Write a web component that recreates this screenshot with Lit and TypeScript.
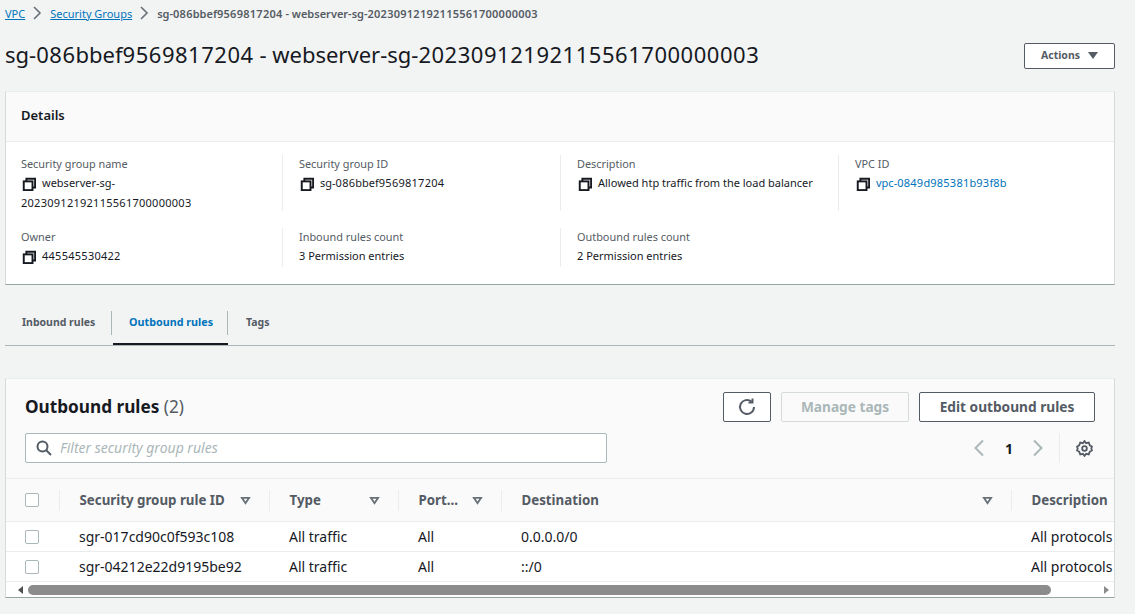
import {LitElement, html, css, svg} from 'lit';
import {customElement} from 'lit/decorators.js';

const copyIcon = html`<svg class="copy" viewBox="0 0 16 16" fill="none" stroke="#16191f" stroke-width="2.2">
  <path d="M5 4.500V2h10v10h-3"></path><rect x="2" y="5" width="10" height="10"></rect>
</svg>`;

const sortIcon = html`<svg class="sort" viewBox="0 0 12 10" width="11" height="9" fill="none" stroke="#687078" stroke-width="2">
  <path d="M2 2h8L6 8z"></path>
</svg>`;

const chevron = (d: string, color: string, sw = 1.6) =>
  html`<svg viewBox="0 0 12 18" width="12" height="18" fill="none" stroke=${color} stroke-width=${sw}>${svg`<path d=${d}></path>`}</svg>`;

// digits run a touch wider in the reference than in Noto Sans
const nums = (s: string) =>
  s.split(/(\d+)/).map((p, i) => (i % 2 ? html`<span class="dg">${p}</span>` : p));

const NAME = 'sg-086bbef9569817204 - webserver-sg-20230912192115561700000003';

const cols = [
  ['Security group rule ID', true],
  ['Type', true],
  ['Port...', true],
  ['Destination', true],
  ['Description', false],
] as const;

const rows = [
  ['sgr-017cd90c0f593c108', 'All traffic', 'All', '0.0.0.0/0', 'All protocols'],
  ['sgr-04212e22d9195be92', 'All traffic', 'All', '::/0', 'All protocols'],
];

@customElement('app-root')
export class AppRoot extends LitElement {
  static override styles = css`
    :host {
      display: block;
      width: 1135px;
      height: 614px;
      overflow: hidden;
      background: #f2f3f3;
      color: #16191f;
      font-family: 'Noto Sans', sans-serif;
      font-size: 11px;
    }
    a {
      color: #0073bb;
    }
    .dg {
      letter-spacing: 0.024em;
    }
    .crumbs {
      display: flex;
      align-items: center;
      height: 14px;
      padding: 6px 0 0 5px;
      font-size: 11px;
    }
    .crumbs a {
      text-decoration: underline;
    }
    .crumbs svg {
      margin: 0 7px 0 6px;
    }
    .crumbs .here {
      color: #545b64;
      font-weight: 600;
    }
    .title {
      display: flex;
      justify-content: space-between;
      align-items: center;
      height: 30px;
      margin: 19px 20px 0 5px;
    }
    h1 {
      margin: 0;
      font-size: 22px;
      font-weight: 400;
      line-height: 30px;
    }
    .btn {
      display: flex;
      align-items: center;
      justify-content: center;
      box-sizing: border-box;
      padding-bottom: 1px;
      border: 1px solid #545b64;
      border-radius: 2px;
      background: #fff;
      color: #545b64;
      font-weight: 700;
      font-size: 13.7px;
      height: 30px;
    }
    .btn.actions {
      width: 91px;
      height: 26px;
      font-size: 10.5px;
      gap: 8px;
      margin-top: 3px;
    }
    .btn.refresh {
      width: 48px;
    }
    .btn.off {
      width: 128px;
      border-color: #d5dbdb;
      color: #aab7b8;
      background: #fafafa;
    }
    .btn.edit {
      width: 176px;
    }
    .card {
      box-sizing: border-box;
      margin: 0 20px 0 5px;
      background: #fff;
      border-left: 1px solid #d5dbdb;
      border-right: 1px solid #d5dbdb;
      border-top: 1px solid #eaeded;
      border-bottom: 1px solid #95a5a6;
    }
    .details {
      margin-top: 22px;
      height: 194px;
    }
    .details-head {
      box-sizing: border-box;
      height: 50px;
      padding-left: 15px;
      line-height: 47px;
      font-size: 13px;
      font-weight: 600;
      background: #fafafa;
      border-bottom: 1px solid #eaeded;
    }
    .grid {
      display: grid;
      grid-template-columns: repeat(4, 278px);
      grid-template-rows: 56px 39px;
      row-gap: 17px;
      padding-top: 13px;
      margin-left: -1px;
    }
    .field {
      box-sizing: border-box;
      padding-left: 16px;
      border-right: 1px solid #eaeded;
      line-height: 20px;
    }
    .field:nth-child(4n),
    .field:last-child {
      border-right: 0;
    }
    .label {
      color: #545b64;
      height: 19px;
      margin-top: -1px;
      font-size: 10.9px;
    }
    .copy {
      vertical-align: -3.5px;
      margin: 0 6px 0 1px;
      width: 14px;
      height: 14px;
    }
    .tabs {
      display: flex;
      box-sizing: border-box;
      height: 41px;
      margin: 20px 20px 0 5px;
      border-bottom: 1px solid #aab7b8;
      font-weight: 700;
      font-size: 10.5px;
      color: #545b64;
    }
    .tab {
      position: relative;
      display: flex;
      align-items: center;
      height: 40px;
      padding: 0 15px 6px 18px;
      box-sizing: border-box;
    }
    .tab::after {
      content: '';
      position: absolute;
      right: 0;
      top: 6px;
      height: 24px;
      width: 1px;
      background: #aab7b8;
    }
    .tab:last-child::after {
      display: none;
    }
    .tab.first {
      width: 107px;
      padding-left: 17px;
    }
    .tab.active {
      width: 115px;
      margin-left: 1px;
      color: #0073bb;
      font-size: 10.75px;
      border-bottom: 2px solid #16191f;
      padding: 0 0 4px 16px;
    }
    .rules {
      margin-top: 32px;
      height: 220px;
      background: #fafafa;
      overflow: hidden;
    }
    .rules-head {
      box-sizing: border-box;
      height: 100px;
      padding: 13px 19px 0 19px;
      border-bottom: 1px solid #eaeded;
    }
    .top {
      display: flex;
      align-items: center;
      height: 30px;
      gap: 10px;
    }
    h2 {
      margin: 0 auto 0 0;
      font-size: 17.2px;
      font-weight: 700;
      line-height: 30px;
    }
    h2 span {
      font-weight: 400;
      color: #545b64;
    }
    .filter-row {
      display: flex;
      align-items: center;
      height: 30px;
      margin-top: 11px;
    }
    .filter {
      display: flex;
      align-items: center;
      gap: 8px;
      box-sizing: border-box;
      width: 582px;
      height: 30px;
      padding: 0 0 1px 10px;
      background: #fff;
      border: 1px solid #aab7b8;
      border-radius: 2px;
      color: #aab7b8;
      font-style: italic;
      font-size: 14px;
    }
    .pager {
      display: flex;
      align-items: center;
      margin-left: auto;
      font-weight: 700;
      font-size: 14px;
      color: #16191f;
    }
    .pager .num {
      margin: 0 19px 0 20px;
    }
    .pager .gear {
      display: flex;
      height: 30px;
      align-items: center;
      margin-left: 15px;
      padding: 0 2px 0 16px;
      border-left: 1px solid #eaeded;
    }
    .row {
      display: grid;
      grid-template-columns: 53px 210px 129px 103px 510px 1fr;
      box-sizing: border-box;
    }
    .row.hd {
      height: 43px;
      border-bottom: 1px solid #eaeded;
      font-weight: 700;
      font-size: 13.3px;
      color: #545b64;
      align-items: center;
    }
    .row.body {
      height: 30px;
      background: #fff;
      border-bottom: 1px solid #eaeded;
      align-items: center;
      font-size: 14px;
      color: #16191f;
      white-space: nowrap;
    }
    .cell {
      display: flex;
      align-items: center;
      justify-content: space-between;
      padding: 0 18px 0 19.5px;
      min-width: 0;
      height: 21px;
      border-left: 1px solid #eaeded;
      white-space: nowrap;
    }
    .row.body .cell {
      border-left: 0;
      padding-left: 20px;
    }
    .cell.check,
    .row.body .cell.check {
      border: 0;
      padding: 0 0 0 19px;
      justify-content: flex-start;
    }
    .cb {
      box-sizing: border-box;
      width: 14px;
      height: 14px;
      border: 1px solid #aab7b8;
      border-radius: 2px;
      background: #fff;
    }
    .scroll {
      display: flex;
      align-items: center;
      height: 15px;
      padding: 0 5px 0 12px;
      background: #fff;
    }
    .thumb {
      width: 1023px;
      height: 10px;
      margin-left: 5px;
      border-radius: 5px;
      background: #8c8c8c;
    }
    .arrow-l,
    .arrow-r {
      width: 0;
      height: 0;
      border-top: 4px solid transparent;
      border-bottom: 4px solid transparent;
    }
    .arrow-l {
      border-right: 5px solid #505050;
    }
    .arrow-r {
      margin-left: auto;
      border-left: 5px solid #8c8c8c;
    }
  `;

  private field(label: string, value: unknown, copy = true, link = false) {
    return html`<div class="field">
      <div class="label">${label}</div>
      <div class="value">
        ${copy ? copyIcon : ''}${link ? html`<a>${value}</a>` : value}
      </div>
    </div>`;
  }

  override render() {
    return html`
      <nav class="crumbs">
        <a>VPC</a>
        ${chevron('M3 3l6 6-6 6', '#687078')}
        <a>Security Groups</a>
        ${chevron('M3 3l6 6-6 6', '#687078')}
        <span class="here">${nums(NAME)}</span>
      </nav>
      <div class="title">
        <h1>${nums(NAME)}</h1>
        <div class="btn actions">
          Actions
          <svg width="10" height="7" viewBox="0 0 10 7"><path d="M0 0h10L5 7z" fill="#545b64"></path></svg>
        </div>
      </div>

      <section class="card details">
        <div class="details-head">Details</div>
        <div class="grid">
          ${this.field('Security group name', html`webserver-sg-<br />${nums('20230912192115561700000003')}`)}
          ${this.field('Security group ID', nums('sg-086bbef9569817204'))}
          ${this.field('Description', 'Allowed htp traffic from the load balancer')}
          ${this.field('VPC ID', nums('vpc-0849d985381b93f8b'), true, true)}
          ${this.field('Owner', nums('445545530422'))}
          ${this.field('Inbound rules count', '3 Permission entries', false)}
          ${this.field('Outbound rules count', '2 Permission entries', false)}
        </div>
      </section>

      <div class="tabs">
        <div class="tab first">Inbound rules</div>
        <div class="tab active">Outbound rules</div>
        <div class="tab">Tags</div>
      </div>

      <section class="card rules">
        <div class="rules-head">
          <div class="top">
            <h2>Outbound rules <span>(2)</span></h2>
            <div class="btn refresh">
              <svg width="18" height="18" viewBox="0 0 18 18" fill="none" stroke="#545b64" stroke-width="2">
                <path d="M16 9a7 7 0 1 1-2.500-5.400"></path><path d="M14.500.5v4h-4"></path>
              </svg>
            </div>
            <div class="btn off">Manage tags</div>
            <div class="btn edit">Edit outbound rules</div>
          </div>
          <div class="filter-row">
            <div class="filter">
              <svg width="16" height="16" viewBox="0 0 16 16" fill="none" stroke="#545b64" stroke-width="2">
                <circle cx="6.500" cy="6.500" r="5"></circle><path d="M10 10l5 5"></path>
              </svg>
              Filter security group rules
            </div>
            <div class="pager">
              ${chevron('M10 1.500L2.500 9l7.500 7.500', '#aab7b8', 2)}
              <span class="num">1</span>
              ${chevron('M2 1.500L9.500 9 2 16.500', '#aab7b8', 2)}
              <div class="gear">
                <svg width="17" height="17" viewBox="0 0 16 16" fill="none" stroke="#545b64" stroke-width="1.7">
                  <path d="M8 1l1.500 2 2.500-.5L13 5l2 1.200-.6 1.800.6 1.800L13 11l-1 2.500-2.500-.5L8 15l-1.500-2-2.500.5L3 11 1 9.800 1.600 8 1 6.200 3 5l1-2.500 2.500.5z"></path>
                  <circle cx="8" cy="8" r="2.200"></circle>
                </svg>
              </div>
            </div>
          </div>
        </div>
        <div class="row hd">
          <div class="cell check"><div class="cb"></div></div>
          ${cols.map(([name, sorted]) => html`<div class="cell">${name}${sorted ? sortIcon : ''}</div>`)}
        </div>
        ${rows.map(
          (r) => html`<div class="row body">
            <div class="cell check"><div class="cb"></div></div>
            ${r.map((c) => html`<div class="cell">${c}</div>`)}
          </div>`
        )}
        <div class="scroll">
          <div class="arrow-l"></div>
          <div class="thumb"></div>
          <div class="arrow-r"></div>
        </div>
      </section>
    `;
  }
}
